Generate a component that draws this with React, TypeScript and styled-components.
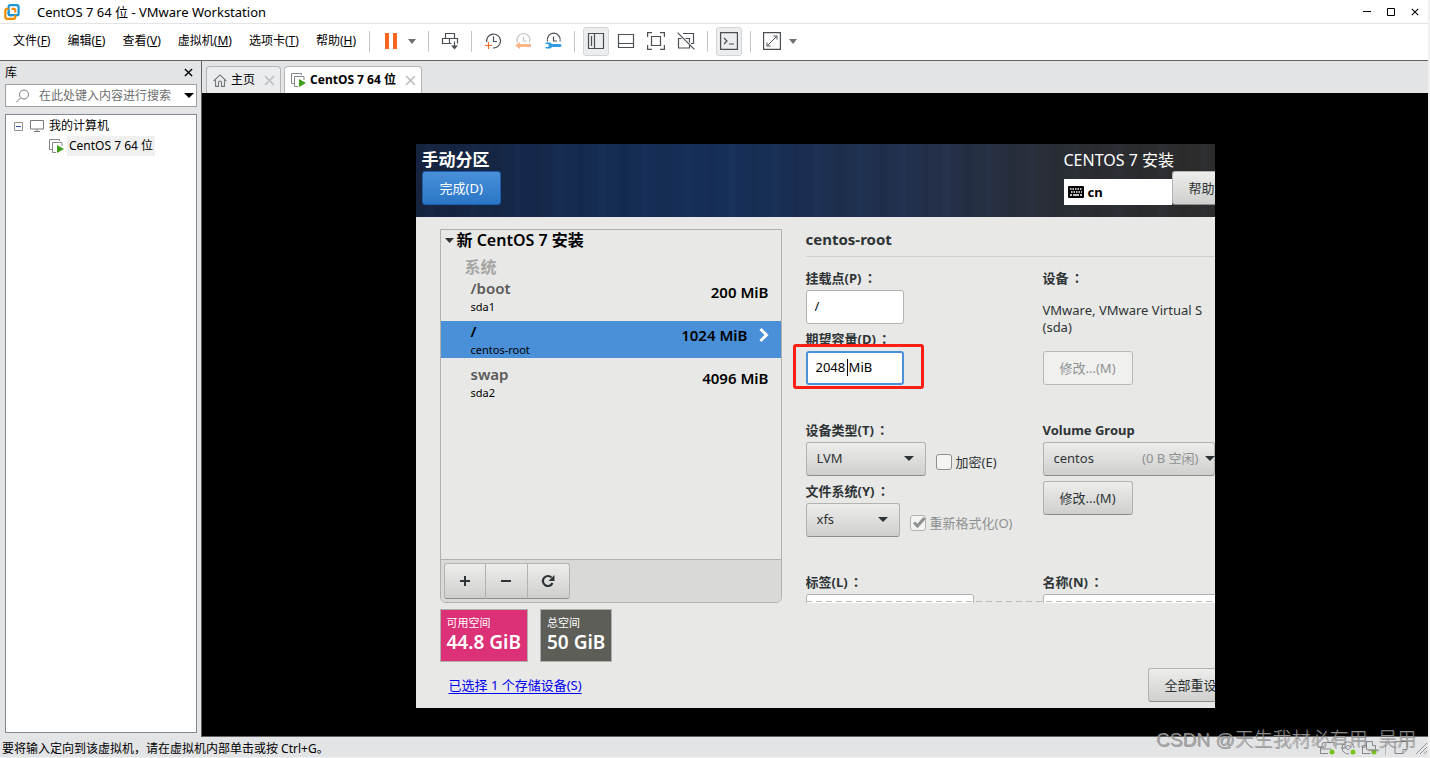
import React from "react";
import styled, { createGlobalStyle, css } from "styled-components";

const ui = `"Noto Sans", "Noto Sans CJK SC", sans-serif`;

const GlobalStyle = createGlobalStyle`
  *, *::before, *::after { box-sizing: border-box; }
  body { margin: 0; background: #f0f0f0; font-family: ${ui}; font-size: 12px; color: #000; }
  button, input, select { font: inherit; color: inherit; margin: 0; }
  svg { display: block; flex: none; }
`;

/* ---------- window frame ---------- */

const Window = styled.div`
  display: flex;
  flex-direction: column;
  min-height: 100vh;
  border-right: 2px solid #f0f0f0;
  border-bottom: 1px solid #f0f0f0;
  background: #e3e4e6;
`;

const TitleBar = styled.header`
  display: flex;
  align-items: center;
  height: 24px;
  padding: 0 1px 0 4px;
  background: #fff;
  border-bottom: 1px solid #e3e4e6;
`;

const WindowTitle = styled.h1`
  flex: 1;
  margin: 0 0 0 17px;
  font-size: 13px;
  line-height: 22px;
  font-weight: 400;
`;

const CaptionButton = styled.button`
  display: grid;
  place-items: center;
  width: 24px;
  height: 22px;
  padding: 0;
  border: 0;
  background: none;
`;

const MenuBar = styled.nav`
  display: flex;
  align-items: center;
  gap: 1px;
  height: 37px;
  padding: 0 0 2px 5px;
  background: #fff;
  border-bottom: 1px solid #646464;
`;

const MenuItem = styled.button`
  height: 30px;
  padding: 0 8px;
  border: 0;
  background: none;
  line-height: 20px;
  white-space: nowrap;
`;

const Tools = styled.div`
  display: flex;
  align-items: center;
  gap: 4px;
`;

const Separator = styled.span`
  width: 1px;
  height: 21px;
  margin: 0 4px;
  background: #c4c4c4;
`;

const ToolButton = styled.button<{ $active?: boolean }>`
  display: grid;
  place-items: center;
  width: 26px;
  height: 29px;
  padding: 0;
  border: 1px solid ${(p) => (p.$active ? "#d4d5d6" : "transparent")};
  border-radius: 3px;
  background: ${(p) => (p.$active ? "#ecedee" : "none")};
`;

const Split = styled.div`
  display: flex;
`;

const DropButton = styled.button`
  display: grid;
  place-items: center;
  width: 16px;
  padding: 0;
  border: 0;
  background: none;
`;

const Workspace = styled.div`
  display: flex;
  flex: 1;
`;

/* ---------- library sidebar ---------- */

const Sidebar = styled.aside`
  display: flex;
  flex-direction: column;
  width: 201px;
  flex: none;
  padding: 0 4px 4px 5px;
`;

const SidebarHead = styled.div`
  display: flex;
  align-items: center;
  justify-content: space-between;
  height: 23px;
  padding-right: 4px;
`;

const SidebarTitle = styled.h2`
  margin: 0;
  font-size: 12px;
  line-height: 20px;
  font-weight: 400;
`;

const PlainButton = styled.button`
  display: grid;
  place-items: center;
  padding: 0;
  border: 0;
  background: none;
`;

const SearchBox = styled.div`
  display: flex;
  align-items: center;
  gap: 9px;
  height: 23px;
  padding: 0 2px 0 10px;
  background: #fff;
  border: 1px solid #a0a0a0;
`;

const SearchInput = styled.input`
  flex: 1;
  min-width: 0;
  height: 20px;
  padding: 0;
  border: 0;
  outline: 0;
  background: none;
  &::placeholder { color: #6d6d6d; opacity: 1; }
`;

const Tree = styled.ul`
  flex: 1;
  margin: 7px 0 0;
  padding: 1px 0;
  list-style: none;
  background: #fff;
  border: 1px solid #828790;
`;

const TreeItem = styled.li<{ $depth: number }>`
  display: flex;
  align-items: center;
  height: 20px;
  padding-left: ${(p) => 8 + p.$depth * 35}px;
  white-space: nowrap;
`;

const TreeLabel = styled.span<{ $selected?: boolean }>`
  margin-left: 3px;
  padding: 0 2px;
  line-height: 20px;
  background: ${(p) => (p.$selected ? "#f0f0f0" : "none")};
`;

const Gap = styled.span`
  width: 7px;
`;

/* ---------- document area ---------- */

const Documents = styled.main`
  display: flex;
  flex: 1;
  flex-direction: column;
  min-width: 0;
  border-left: 1px solid #646464;
  border-bottom: 1px solid #646464;
`;

const TabStrip = styled.div`
  display: flex;
  align-items: flex-end;
  gap: 3px;
  height: 32px;
  padding-left: 4px;
`;

const Tab = styled.div<{ $current?: boolean }>`
  display: flex;
  align-items: center;
  height: 27px;
  padding: 0 5px 0 6px;
  border: 1px solid #b4b5b7;
  border-bottom: 0;
  border-radius: 4px 4px 0 0;
  background: ${(p) => (p.$current ? "#fff" : "#ebecee")};
  font-weight: ${(p) => (p.$current ? 700 : 400)};
`;

const TabName = styled.button`
  padding: 0 9px 0 4px;
  border: 0;
  background: none;
  line-height: 20px;
  white-space: nowrap;
`;

const Guest = styled.div`
  display: flex;
  flex: 1;
  align-items: center;
  justify-content: center;
  padding-top: 23px;
  background: #000;
`;

/* ---------- installer ---------- */

const Installer = styled.section`
  width: 100%;
  max-width: 799px;
  overflow: hidden;
  background: #e8e8e6;
  color: #2e3436;
  font-size: 13px;
`;

const Banner = styled.div`
  display: flex;
  justify-content: space-between;
  height: 73px;
  padding: 5px 0 0 6px;
  color: #fff;
  background:
    repeating-linear-gradient(90deg, transparent 0 9px, rgba(70, 120, 190, 0.04) 13px 16px, transparent 20px 31px, rgba(0, 0, 0, 0.05) 36px, transparent 43px),
    linear-gradient(90deg, #16233d 0%, #152b50 20%, #152f59 38%, #1c2f50 50%, #23304a 65%, #2a2d33 82%, #2d2c2c 100%);
`;

const BannerSide = styled.div<{ $width?: number }>`
  ${(p) => p.$width && css`width: ${p.$width}px; flex: none;`}
`;

const BannerTitle = styled.h2`
  margin: 0;
  font-size: 17px;
  line-height: 22px;
`;

const ProductName = styled.div`
  font-size: 16px;
  line-height: 22px;
`;

const raised = css`
  border: 1px solid #b2b2ae;
  border-bottom-color: #8e8e8a;
  border-radius: 3px;
  background: linear-gradient(#ededeb, #dededc 50%, #cfcfcd);
`;

const Button = styled.button<{ $primary?: boolean; $wide?: number }>`
  ${raised}
  height: 34px;
  padding: 0 16px 1px;
  min-width: ${(p) => p.$wide ?? 0}px;
  line-height: 20px;
  text-align: left;
  white-space: nowrap;
  color: #2e3436;
  flex: none;
  ${(p) =>
    p.$primary &&
    css`
      padding: 0 17px 1px;
      border-color: #1c5fa8;
      background: linear-gradient(#4a90d9, #2a76c6);
      color: #fff;
    `}
  &:disabled {
    border-color: #b8b8b4;
    background: #f0f0ef;
    color: #8e9192;
  }
`;

const LayoutRow = styled.div`
  display: flex;
  align-items: flex-end;
`;

const KeyboardBox = styled.div`
  display: flex;
  align-items: center;
  gap: 4px;
  width: 108px;
  flex: none;
  height: 26px;
  padding-left: 4px;
  background: #fff;
  color: #000;
  font-weight: 700;
  line-height: 20px;
`;

const Body = styled.div`
  padding: 12px 0 6px 24px;
`;

const Columns = styled.div`
  display: flex;
  gap: 24px;
`;

const Partitions = styled.div`
  display: flex;
  flex-direction: column;
  width: 342px;
  flex: none;
  border: 1px solid #b0b0ad;
  border-radius: 0 0 6px 6px;
  color: #000;
`;

const PartitionList = styled.div`
  flex: 1;
`;

const GroupTitle = styled.h3`
  display: flex;
  align-items: center;
  gap: 3px;
  margin: 0;
  padding-left: 4px;
  font-size: 16px;
  font-weight: 600;
  line-height: 21px;
`;

const GroupName = styled.h4`
  margin: 5px 0 0;
  padding-left: 24px;
  font-size: 16px;
  line-height: 22px;
  color: #a5a5a4;
`;

const Partition = styled.div<{ $selected?: boolean }>`
  display: flex;
  justify-content: space-between;
  height: 37px;
  margin-bottom: 6px;
  padding: 0 12px 0 30px;
  background: ${(p) => (p.$selected ? "#4a90d9" : "none")};
`;

const MountPoint = styled.div<{ $selected?: boolean }>`
  font-size: 15px;
  line-height: 21px;
  font-weight: 600;
  color: ${(p) => (p.$selected ? "#000" : "#5a5a5a")};
`;

const DeviceName = styled.div`
  font-size: 11px;
  line-height: 16px;
`;

const Size = styled.div`
  display: flex;
  align-items: center;
  gap: 11px;
  height: 28px;
  font-size: 15px;
  line-height: 20px;
  font-weight: 600;
`;

const ListActions = styled.div`
  display: flex;
  padding: 3px;
  border-top: 1px solid #b0b0ad;
  border-radius: 0 0 5px 5px;
  background: #d9d9d7;
`;

const ListButton = styled.button`
  ${raised}
  display: grid;
  place-items: center;
  width: 42px;
  height: 36px;
  padding: 0;
  border-radius: 0;
  & + & { border-left: 0; }
  &:first-child { border-radius: 3px 0 0 3px; }
  &:last-child { border-radius: 0 3px 3px 0; }
`;

const Details = styled.form`
  flex: 1;
  min-width: 0;
`;

const DetailsTitle = styled.h3`
  margin: 0 0 9px;
  padding-bottom: 7px;
  border-bottom: 1px solid #cfcfcd;
  font-size: 15px;
  line-height: 20px;
`;

const FieldGrid = styled.div`
  display: grid;
  grid-template-columns: 237px minmax(172px, 1fr);
  row-gap: 33px;
`;

const Cell = styled.div`
  display: flex;
  flex-direction: column;
  gap: 3px;
  min-width: 0;
`;

const CutCell = styled.div`
  display: flex;
  flex-direction: column;
  min-width: 0;
  height: 33px;
  overflow: hidden;
`;

const ScrollEdge = styled.div`
  position: relative;
  &::after {
    content: "";
    position: absolute;
    left: 0;
    right: 0;
    bottom: 1px;
    height: 1px;
    background: repeating-linear-gradient(90deg, #b9b9b7 0 6px, transparent 6px 10px);
  }
`;

const Field = styled.div`
  display: flex;
  flex-direction: column;
  align-items: flex-start;
`;

const FieldLabel = styled.label`
  height: 24px;
  font-size: 13px;
  line-height: 24px;
  font-weight: 700;
  white-space: nowrap;
`;

const Colon = styled.span`
  margin-left: 2px;
  font-family: "Noto Sans CJK TC", sans-serif;
`;

const Controls = styled.div`
  display: flex;
  gap: 10px;
`;

const Entry = styled.input<{ $width: string; $focused?: boolean }>`
  width: ${(p) => p.$width};
  height: 34px;
  flex: none;
  padding: 0 8px 2px 8px;
  border: 1px solid #b2b2ae;
  border-radius: 3px;
  outline: 0;
  background: #fff;
  color: #000;
  ${(p) =>
    p.$focused &&
    css`
      border: 2px solid #4a90d9;
    `}
`;

const Marked = styled.div`
  position: relative;
`;

const Caret = styled.span`
  position: absolute;
  left: 41px;
  top: 8px;
  width: 1px;
  height: 17px;
  background: #000;
`;

const Highlight = styled.span`
  position: absolute;
  inset: -7px -20px -4px -13px;
  border: 3px solid #fb1f14;
  border-radius: 3px;
  pointer-events: none;
`;

const SelectWrap = styled.div<{ $width: string }>`
  display: grid;
  align-items: center;
  width: ${(p) => p.$width};
  & > * { grid-area: 1 / 1; }
`;

const Select = styled.select`
  ${raised}
  appearance: none;
  width: 100%;
  height: 34px;
  padding: 0 10px 2px;
  outline: 0;
`;

const SelectEnd = styled.span<{ $flush?: boolean }>`
  display: flex;
  align-items: center;
  gap: 6px;
  justify-self: end;
  padding: 0 ${(p) => (p.$flush ? 0 : 12)}px 2px 0;
  line-height: 20px;
  color: #8e9192;
  white-space: nowrap;
  pointer-events: none;
`;

const Check = styled.label<{ $disabled?: boolean }>`
  display: flex;
  align-items: center;
  gap: 4px;
  height: 20px;
  margin-top: 10px;
  line-height: 18px;
  white-space: nowrap;
  color: ${(p) => (p.$disabled ? "#8e9192" : "#2e3436")};
`;

const CheckInput = styled.input`
  appearance: none;
  width: 16px;
  height: 16px;
  border: 1px solid #8e8e8a;
  border-radius: 3px;
  background: #f4f4f3;
  &:disabled { border-color: #b2b2ae; }
`;

const CheckBox = styled.span`
  display: grid;
  & > * { grid-area: 1 / 1; }
`;

const DeviceText = styled.p`
  margin: 12px 0 15px;
  line-height: 17px;
`;

const DeviceField = styled(Field)`
  max-width: 172px;
`;

const GroupField = styled.div`
  display: flex;
  flex-direction: column;
  align-items: flex-start;
  gap: 5px;
`;

const Tiles = styled.div`
  display: flex;
  gap: 12px;
  margin: 6px 0;
`;

const Tile = styled.div<{ $color: string }>`
  height: 53px;
  padding: 4px 6px;
  border: 1px solid #b0b0ad;
  background: ${(p) => p.$color};
  color: #fff;
  font-size: 11px;
  line-height: 18px;
`;

const TileValue = styled.div`
  font-size: 19px;
  line-height: 21px;
  font-weight: 600;
`;

const Foot = styled.div`
  display: flex;
  align-items: center;
  justify-content: space-between;
  margin-right: -41px;
  padding-left: 9px;
`;

const StorageLink = styled.a`
  line-height: 20px;
  color: #0000f0;
  text-decoration: underline;
  text-underline-offset: 3px;
`;

/* ---------- status bar ---------- */

const StatusBar = styled.footer`
  position: relative;
  display: flex;
  align-items: center;
  justify-content: space-between;
  height: 20px;
  padding-left: 2px;
`;

const StatusText = styled.span`
  padding-top: 3px;
  line-height: 17px;
`;

const StatusIcons = styled.div`
  display: flex;
  align-items: flex-end;
  gap: 5px;
`;

const StatusRule = styled.span`
  width: 1px;
  height: 14px;
  margin: 0 3px;
  background: #b4b5b7;
`;

const Watermark = styled.div`
  position: absolute;
  right: 12px;
  bottom: 3px;
  font-family: "Liberation Sans", "Noto Sans CJK SC", sans-serif;
  font-size: 19px;
  line-height: 28px;
  font-weight: 300;
  white-space: nowrap;
  color: rgba(160, 160, 160, 0.9);
  text-shadow: 1px 1px 0 rgba(90, 90, 90, 0.5);
  pointer-events: none;
`;

/* ---------- drawings ---------- */

const Down = ({ w = 9, h = 5, color = "#707070" }) => (
  <svg width={w} height={h} viewBox="0 0 10 5" preserveAspectRatio="none">
    <path d="M0 0h10L5 5z" fill={color} />
  </svg>
);

const Cross = ({ size = 9, color = "#000", width = 1.5 }) => (
  <svg width={size} height={size} viewBox="0 0 10 10">
    <path d="M1 1l8 8M9 1L1 9" stroke={color} strokeWidth={width} />
  </svg>
);

const Icon = ({ children, size = 18 }: { children: React.ReactNode; size?: number }) => (
  <svg width={size} height={size} viewBox="0 0 18 18" fill="none" stroke="#4b4f54" strokeWidth="1.2">
    {children}
  </svg>
);

const Logo = () => (
  <svg width="16" height="16" viewBox="0 0 16 16" fill="none" strokeWidth="2.2">
    <rect x="4.6" y="1.2" width="10" height="10" rx="1.8" stroke="#1a96d4" />
    <path d="M4.6 4.8H3A1.7 1.7 0 0 0 1.3 6.5v6.6A1.7 1.7 0 0 0 3 14.8h6.6a1.7 1.7 0 0 0 1.7-1.7V11" stroke="#f38b00" />
    <path d="M7.5 4.8h2.2a1.6 1.6 0 0 1 1.6 1.6v2" stroke="#f38b00" />
    <path d="M4.7 7.5V9.6a1.6 1.6 0 0 0 1.6 1.6h2" stroke="#1a96d4" />
  </svg>
);

const MachineIcon = () => (
  <svg width="15" height="14" viewBox="0 0 15 14" fill="none">
    <path d="M3 10.500H.500V.500h10V2" stroke="#85888b" />
    <path d="M7 13.500H3.500V3.500h9.500V7" stroke="#85888b" />
    <path d="M8 6l7 4-7 4z" fill="#3f9c1c" />
  </svg>
);

const HomeIcon = () => (
  <svg width="14" height="13" viewBox="0 0 14 13" fill="none" stroke="#77797b" strokeWidth="1.1">
    <path d="M.6 7L7 .9 13.4 7M2.500 6v6.400h3V8.500a1.500 1.500 0 0 1 3 0v3.900h3V6" />
  </svg>
);

const UiLabel = ({ id, children }: { id?: string; children: string }) => (
  <FieldLabel htmlFor={id}>
    {children}
    <Colon>：</Colon>
  </FieldLabel>
);

const VolumeGroup = () => (
  <Field>
    <FieldLabel htmlFor="vg">Volume Group</FieldLabel>
    <SelectWrap $width="100%">
      <Select id="vg"><option>centos</option></Select>
      <SelectEnd $flush>
        (0 B 空闲)
        <Down w={10} color="#2e3436" />
      </SelectEnd>
    </SelectWrap>
  </Field>
);

const menus: [string, string][] = [
  ["文件", "F"],
  ["编辑", "E"],
  ["查看", "V"],
  ["虚拟机", "M"],
  ["选项卡", "T"],
  ["帮助", "H"],
];

const partitions = [
  { mount: "/boot", device: "sda1", size: "200 MiB" },
  { mount: "/", device: "centos-root", size: "1024 MiB", selected: true },
  { mount: "swap", device: "sda2", size: "4096 MiB" },
];

/* disk, optical drive and network indicators */
const devices = [
  "M15 6V2.500H4L1.500 9v4.500H9M1.500 9h11",
  "M9 13.800A6 6 0 1 1 14 8M8 5.500a2 2 0 1 0 .1 0",
  "M1.500 13.500V5.500h4M1.500 13.500h8M5.500 9.500v-8h6v4h3v4M5.500 9.500h5",
];

export default function App() {
  return (
    <Window>
      <GlobalStyle />
      <TitleBar>
        <Logo />
        <WindowTitle>CentOS 7 64 位 - VMware Workstation</WindowTitle>
        <CaptionButton aria-label="最小化">
          <svg width="8" height="2"><path d="M0 .5h8" stroke="#000" /></svg>
        </CaptionButton>
        <CaptionButton aria-label="最大化">
          <svg width="8" height="8"><path d="M.5.5h7v7h-7z" fill="none" stroke="#000" /></svg>
        </CaptionButton>
        <CaptionButton aria-label="关闭"><Cross size={8} width={1.3} /></CaptionButton>
      </TitleBar>

      <MenuBar>
        {menus.map(([name, key]) => (
          <MenuItem key={key}>
            {name}(<u>{key}</u>)
          </MenuItem>
        ))}
        <Tools>
          <Separator />
          <Split>
            <ToolButton aria-label="暂停">
              <svg width="12" height="16"><path d="M0 0h4v16H0zM8 0h4v16H8z" fill="#fb651e" /></svg>
            </ToolButton>
            <DropButton aria-label="电源"><Down w={8} /></DropButton>
          </Split>
          <Separator />
          <ToolButton aria-label="发送">
            <Icon>
              <path d="M4.500 1.500h9v5h-9zM10.500 11.500H1.500v-5h15v5M8.500 6.500v5M13.500 9.500v5" />
              <path d="M10 13.500h7l-3.500 4z" fill="#4b4f54" stroke="none" />
            </Icon>
          </ToolButton>
          <Separator />
          <ToolButton aria-label="拍摄快照">
            <Icon>
              <path d="M2.600 10A7 7 0 1 1 9 16M9.500 4.500v5H13" />
              <path d="M1 13.500h7M4.500 10v7" stroke="#f06a2a" />
            </Icon>
          </ToolButton>
          <ToolButton aria-label="恢复快照" disabled>
            <Icon>
              <path d="M3.500 10.500A6.500 6.500 0 1 1 15.500 10.500M9.500 4.500v4.500H13" stroke="#c4c6c8" />
              <path d="M1 13.500l5-3.500v2h11v3H6v2z" fill="#fbb48c" stroke="none" />
            </Icon>
          </ToolButton>
          <ToolButton aria-label="管理快照">
            <Icon>
              <path d="M3.500 9.500A6.500 6.500 0 1 1 16 9.500M9.500 4.500v4.500H13" />
              <path d="M2 10.500h4.500l1.500 1.500h8a1.500 1.500 0 0 1 0 3H8l-1.500 1.500H2L1 15h3.500v-3H1z" fill="#2f9be0" stroke="none" />
            </Icon>
          </ToolButton>
          <Separator />
          <ToolButton $active aria-label="显示库">
            <Icon><path d="M1.500 1.500h15v15h-15zM7.500 1.500v15M4.500 4v10" /></Icon>
          </ToolButton>
          <ToolButton aria-label="缩略图">
            <Icon><path d="M1.500 2.500h15v13h-15zM1.500 11.500h15" /></Icon>
          </ToolButton>
          <ToolButton aria-label="全屏">
            <Icon><path d="M.6 5V.6H5M13 .6h4.400V5M17.400 13v4.400H13M5 17.400H.6V13M4.500 4.500h9v9h-9z" /></Icon>
          </ToolButton>
          <ToolButton aria-label="Unity">
            <Icon>
              <path d="M6 1.500h10.500v10H14M1.500 6v10h11v-3M1.500 6.500h3M8.500 6.500h4v4M.6.6l16.800 16.800" />
            </Icon>
          </ToolButton>
          <Separator />
          <ToolButton $active aria-label="控制台">
            <Icon><path d="M.6.6h16.800v16.800H.6zM4 6l3 3-3 3M9 12h5" /></Icon>
          </ToolButton>
          <Separator />
          <Split>
            <ToolButton aria-label="拉伸">
              <Icon>
                <path d="M.6.6h16.800v16.800H.6z" />
                <path d="M10.500 4h3.500v3.500M7.500 14H4v-3.500M13.500 4.500l-9 9" strokeWidth="1" />
              </Icon>
            </ToolButton>
            <DropButton aria-label="拉伸选项"><Down w={8} /></DropButton>
          </Split>
        </Tools>
      </MenuBar>

      <Workspace>
        <Sidebar>
          <SidebarHead>
            <SidebarTitle>库</SidebarTitle>
            <PlainButton aria-label="关闭库"><Cross /></PlainButton>
          </SidebarHead>
          <SearchBox>
            <svg width="14" height="14" fill="none" stroke="#77797b">
              <circle cx="8" cy="5.500" r="4.500" />
              <path d="M4.500 9L.5 13" />
            </svg>
            <SearchInput aria-label="搜索" placeholder="在此处键入内容进行搜索" />
            <Down w={10} color="#000" />
          </SearchBox>
          <Tree>
            <TreeItem $depth={0}>
              <svg width="9" height="9" fill="none"><path d="M.5.5h8v8h-8z" stroke="#919191" /><path d="M2 4.500h5" stroke="#2c4fa8" /></svg>
              <Gap />
              <svg width="14" height="12" fill="none" stroke="#77797b"><path d="M.5.500h13v8.500H.5zM7 9v2M4 11.500h6" /></svg>
              <TreeLabel>我的计算机</TreeLabel>
            </TreeItem>
            <TreeItem $depth={1}>
              <MachineIcon />
              <TreeLabel $selected>CentOS 7 64 位</TreeLabel>
            </TreeItem>
          </Tree>
        </Sidebar>

        <Documents>
          <TabStrip>
            <Tab>
              <HomeIcon />
              <TabName>主页</TabName>
              <PlainButton aria-label="关闭主页"><Cross size={11} color="#c3c3c3" /></PlainButton>
            </Tab>
            <Tab $current>
              <MachineIcon />
              <TabName>CentOS 7 64 位</TabName>
              <PlainButton aria-label="关闭标签"><Cross size={11} color="#c3c3c3" /></PlainButton>
            </Tab>
          </TabStrip>

          <Guest>
            <Installer>
              <Banner>
                <BannerSide>
                  <BannerTitle>手动分区</BannerTitle>
                  <Button $primary>完成(D)</Button>
                </BannerSide>
                <BannerSide $width={151}>
                  <ProductName>CENTOS 7 安装</ProductName>
                  <LayoutRow>
                    <KeyboardBox>
                      <svg width="16" height="12" viewBox="0 0 16 12">
                        <rect width="16" height="12" rx="1" fill="#000" />
                        <path d="M2 3h12M3 6h11" stroke="#fff" strokeWidth="1.5" strokeDasharray="1.5 1" />
                        <path d="M2 9h2M5 9h6M12 9h2" stroke="#fff" strokeWidth="1.5" />
                      </svg>
                      cn
                    </KeyboardBox>
                    <Button $wide={80}>帮助</Button>
                  </LayoutRow>
                </BannerSide>
              </Banner>

              <Body>
                <Columns>
                  <Partitions>
                    <PartitionList>
                      <GroupTitle>
                        <Down w={9} color="#2e3436" />
                        新 CentOS 7 安装
                      </GroupTitle>
                      <GroupName>系统</GroupName>
                      {partitions.map((p) => (
                        <Partition key={p.mount} $selected={p.selected}>
                          <div>
                            <MountPoint $selected={p.selected}>{p.mount}</MountPoint>
                            <DeviceName>{p.device}</DeviceName>
                          </div>
                          <Size>
                            {p.size}
                            {p.selected && (
                              <svg width="10" height="14" fill="none"><path d="M1.500 1l6 6-6 6" stroke="#fff" strokeWidth="3" /></svg>
                            )}
                          </Size>
                        </Partition>
                      ))}
                    </PartitionList>
                    <ListActions>
                      <ListButton aria-label="添加">
                        <svg width="10" height="10"><path d="M0 5h10M5 0v10" stroke="#2e3436" strokeWidth="2" /></svg>
                      </ListButton>
                      <ListButton aria-label="删除">
                        <svg width="10" height="10"><path d="M0 5h10" stroke="#2e3436" strokeWidth="2" /></svg>
                      </ListButton>
                      <ListButton aria-label="刷新">
                        <svg width="14" height="14" fill="none">
                          <path d="M10.500 3.500A5 5 0 1 0 11.500 9" stroke="#2e3436" strokeWidth="2.200" />
                          <path d="M13.500 1v6H7.500z" fill="#2e3436" />
                        </svg>
                      </ListButton>
                    </ListActions>
                  </Partitions>

                  <Details>
                    <DetailsTitle>centos-root</DetailsTitle>
                    <ScrollEdge>
                      <FieldGrid>
                        <Cell>
                          <Field>
                            <UiLabel id="mount">挂载点(P)</UiLabel>
                            <Entry id="mount" $width="98px" defaultValue="/" />
                          </Field>
                          <Field>
                            <UiLabel id="capacity">期望容量(D)</UiLabel>
                            <Marked>
                              <Entry id="capacity" $width="98px" $focused defaultValue="2048 MiB" />
                              <Caret />
                              <Highlight />
                            </Marked>
                          </Field>
                        </Cell>
                        <DeviceField>
                          <UiLabel>设备</UiLabel>
                          <DeviceText>VMware, VMware Virtual S (sda)</DeviceText>
                          <Button type="button" disabled>修改...(M)</Button>
                        </DeviceField>

                        <Cell>
                          <Field>
                            <UiLabel id="type">设备类型(T)</UiLabel>
                            <Controls>
                              <SelectWrap $width="120px">
                                <Select id="type"><option>LVM</option></Select>
                                <SelectEnd><Down w={10} color="#2e3436" /></SelectEnd>
                              </SelectWrap>
                              <Check>
                                <CheckInput type="checkbox" />
                                加密(E)
                              </Check>
                            </Controls>
                          </Field>
                          <Field>
                            <UiLabel id="fs">文件系统(Y)</UiLabel>
                            <Controls>
                              <SelectWrap $width="94px">
                                <Select id="fs"><option>xfs</option></Select>
                                <SelectEnd><Down w={10} color="#2e3436" /></SelectEnd>
                              </SelectWrap>
                              <Check $disabled>
                                <CheckBox>
                                  <CheckInput type="checkbox" defaultChecked disabled />
                                  <svg width="16" height="16" fill="none"><path d="M4 7.500l3.500 3.500 7-8" stroke="#8e9192" strokeWidth="3" /></svg>
                                </CheckBox>
                                重新格式化(O)
                              </Check>
                            </Controls>
                          </Field>
                        </Cell>
                        <GroupField>
                          <SelectWrap $width="100%">
                            <VolumeGroup />
                          </SelectWrap>
                          <Button type="button">修改...(M)</Button>
                        </GroupField>

                        <CutCell>
                          <UiLabel id="label">标签(L)</UiLabel>
                          <Entry id="label" $width="168px" />
                        </CutCell>
                        <CutCell>
                          <UiLabel id="name">名称(N)</UiLabel>
                          <Entry id="name" $width="calc(100% + 8px)" />
                        </CutCell>
                      </FieldGrid>
                    </ScrollEdge>
                  </Details>
                </Columns>

                <Tiles>
                  <Tile $color="#dc3077">
                    可用空间
                    <TileValue>44.8 GiB</TileValue>
                  </Tile>
                  <Tile $color="#5d5e58">
                    总空间
                    <TileValue>50 GiB</TileValue>
                  </Tile>
                </Tiles>

                <Foot>
                  <StorageLink href="#storage">已选择 1 个存储设备(S)</StorageLink>
                  <Button $wide={108}>全部重设</Button>
                </Foot>
              </Body>
            </Installer>
          </Guest>
        </Documents>
      </Workspace>

      <StatusBar>
        <StatusText>要将输入定向到该虚拟机，请在虚拟机内部单击或按 Ctrl+G。</StatusText>
        <StatusIcons>
          {devices.map((d) => (
            <svg key={d} width="16" height="15" fill="none">
              <path d={d} stroke="#85878a" />
              <circle cx="13" cy="12" r="2.500" fill="#78c41e" />
            </svg>
          ))}
          <StatusRule />
          <svg width="16" height="15" fill="none" stroke="#85878a"><path d="M1 1.500h12v8l-4 4H1zM9 13.500v-4h4" /></svg>
          <svg width="13" height="13" fill="none" stroke="#9a9c9f"><path d="M1 12L12 1M5 12l7-7M9 12l3-3" /></svg>
        </StatusIcons>
        <Watermark>CSDN @天生我材必有用_吴用</Watermark>
      </StatusBar>
    </Window>
  );
}
